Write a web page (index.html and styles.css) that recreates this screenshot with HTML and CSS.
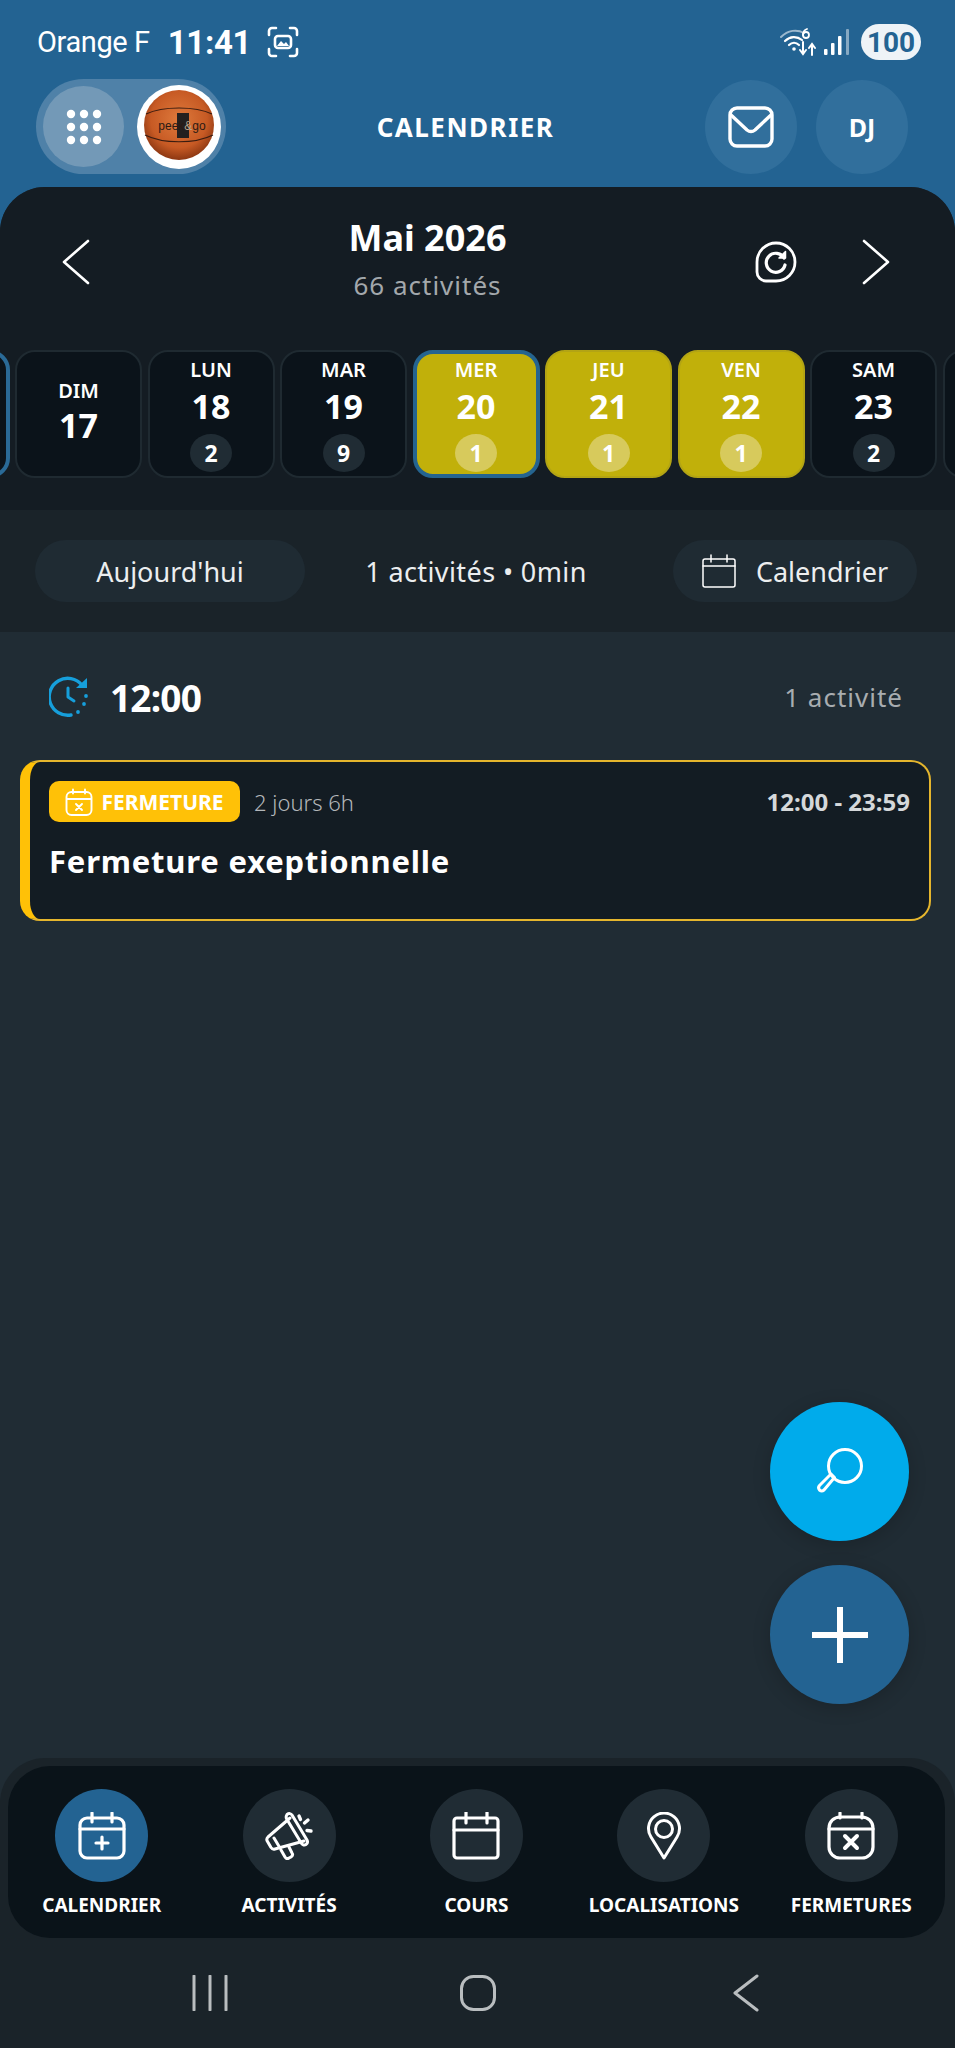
FILE: index.html
```html
<!DOCTYPE html>
<html lang="fr">
<head>
    <meta charset="UTF-8">
    <meta name="viewport" content="width=device-width, initial-scale=1.0">
    <title>Calendrier</title>
    <link rel="stylesheet" href="styles.css">
</head>
<body>
    <!-- Android status bar -->
    <div class="status">
        <div class="status-left">
            <span class="carrier">Orange F</span>
            <span class="clock">11:41</span>
            <svg class="shot-icon" viewBox="0 0 32 32" fill="none" stroke="#fff" stroke-width="2.6" stroke-linecap="round">
                <path d="M2 9V5a3 3 0 0 1 3-3h4M23 2h4a3 3 0 0 1 3 3v4M30 23v4a3 3 0 0 1-3 3h-4M9 30H5a3 3 0 0 1-3-3v-4"/>
                <rect x="8" y="10" width="16" height="12" rx="3"/>
                <path d="M10 20l4-5 3 3 2-2 3 4z" fill="#fff" stroke="none"/>
            </svg>
        </div>
        <div class="status-right">
            <svg class="wifi-icon" viewBox="0 0 36 28" fill="none" stroke="#fff" stroke-linecap="round">
                <path d="M1 9C8 2 17 1 24 5" stroke-width="2" opacity=".55"/>
                <path d="M5 13c5-5 12-5 17-1" stroke-width="2.2"/>
                <path d="M9 17c3-3 7-3 10 0" stroke-width="2.2"/>
                <circle cx="14" cy="21" r="1.8" fill="#fff" stroke="none"/>
                <path d="M23 14v11M20 22l3 4 3-4M32 27V17M29 20l3-4 3 4" stroke-width="2"/>
                <circle cx="26" cy="7" r="3" stroke-width="1.8"/>
                <path d="M23 7c0-3 1-5 4-6" stroke-width="1.8"/>
            </svg>
            <svg class="signal-icon" viewBox="0 0 26 26" fill="#fff">
                <rect x="0" y="20" width="3.5" height="6" rx="1"/>
                <rect x="7" y="14" width="3.5" height="12" rx="1"/>
                <rect x="14" y="7" width="3.5" height="19" rx="1"/>
                <rect x="22" y="0" width="3" height="26" rx="1" opacity=".45"/>
            </svg>
            <span class="battery">100</span>
        </div>
    </div>

    <!-- App header -->
    <header class="appbar">
        <div class="switcher">
            <div class="grid-btn">
                <svg viewBox="0 0 36 36" fill="#fff" class="dots-icon">
                    <circle cx="5" cy="5" r="4.2"/><circle cx="18" cy="5" r="4.2"/><circle cx="31" cy="5" r="4.2"/>
                    <circle cx="5" cy="18" r="4.2"/><circle cx="18" cy="18" r="4.2"/><circle cx="31" cy="18" r="4.2"/>
                    <circle cx="5" cy="31" r="4.2"/><circle cx="18" cy="31" r="4.2"/><circle cx="31" cy="31" r="4.2"/>
                </svg>
            </div>
            <div class="avatar">
                <svg viewBox="0 0 76 76" class="ball">
                    <defs>
                        <radialGradient id="ballFill" cx="50%" cy="42%" r="62%">
                            <stop offset="0" stop-color="#de7a3c"/>
                            <stop offset=".65" stop-color="#c75a24"/>
                            <stop offset="1" stop-color="#7f2f0e"/>
                        </radialGradient>
                    </defs>
                    <circle cx="38" cy="36" r="35" fill="url(#ballFill)"/>
                    <path d="M5 25C22 17 54 17 71 25M4 46C22 55 54 55 72 46" fill="none" stroke="#3a1c10" stroke-width="1.2"/>
                    <rect x="36" y="24" width="12" height="25" fill="#23201f"/>
                    <text x="41" y="41" class="ball-text" text-anchor="middle">peek<tspan class="ball-amp">&amp;</tspan>go</text>
                </svg>
            </div>
        </div>
        <div class="app-title">CALENDRIER</div>
        <div class="app-actions">
            <div class="round-btn">
                <svg viewBox="0 0 46 42" class="mail-icon" fill="none" stroke="#fff" stroke-width="3.4" stroke-linecap="round" stroke-linejoin="round">
                    <rect x="2" y="2" width="42" height="38" rx="7"/>
                    <path d="M3 9l16 15c2.500 2 5.500 2 8 0L43 9"/>
                </svg>
            </div>
            <div class="round-btn initials">DJ</div>
        </div>
    </header>

    <div class="sheet">
        <section class="cal-panel">
            <div class="month-row">
                <svg class="chevron" viewBox="0 0 28 46" fill="none" stroke="#fff" stroke-width="2.600" stroke-linecap="round" stroke-linejoin="round"><path d="M26 2L2 23l24 21"/></svg>
                <div class="month-title">
                    <div class="month-name">Mai 2026</div>
                    <div class="month-count">66 activités</div>
                </div>
                <svg class="refresh-icon" viewBox="0 0 42 42" fill="none" stroke="#fff" stroke-linecap="round" stroke-linejoin="round">
                    <path d="M21 2a19 19 0 0 1 0 38H11a9 9 0 0 1-9-9V21A19 19 0 0 1 21 2z" stroke-width="2.800"/>
                    <path d="M29 17a9.500 9.500 0 1 0 1 7" stroke-width="3.200"/>
                    <path d="M24 17h6.500v-6.500z" fill="#fff" stroke-width="1.500"/>
                </svg>
                <svg class="chevron" viewBox="0 0 28 46" fill="none" stroke="#fff" stroke-width="2.600" stroke-linecap="round" stroke-linejoin="round"><path d="M2 2l24 21L2 44"/></svg>
            </div>

            <div class="day-strip">
                <div class="day day-today"></div>
                <div class="day day-empty"><span class="day-name">DIM</span><span class="day-num">17</span></div>
                <div class="day"><span class="day-name">LUN</span><span class="day-num">18</span><span class="day-count">2</span></div>
                <div class="day"><span class="day-name">MAR</span><span class="day-num">19</span><span class="day-count">9</span></div>
                <div class="day day-closed day-selected"><span class="day-name">MER</span><span class="day-num">20</span><span class="day-count">1</span></div>
                <div class="day day-closed"><span class="day-name">JEU</span><span class="day-num">21</span><span class="day-count">1</span></div>
                <div class="day day-closed"><span class="day-name">VEN</span><span class="day-num">22</span><span class="day-count">1</span></div>
                <div class="day"><span class="day-name">SAM</span><span class="day-num">23</span><span class="day-count">2</span></div>
                <div class="day"></div>
            </div>
        </section>

        <section class="summary">
            <div class="pill pill-today">Aujourd'hui</div>
            <div class="summary-text">1 activités • 0min</div>
            <div class="pill pill-cal">
                <svg viewBox="0 0 34 34" class="pill-icon" fill="none" stroke="#fff" stroke-width="1.500" stroke-linecap="round" stroke-linejoin="round">
                    <rect x="1" y="5" width="32" height="28" rx="2"/>
                    <path d="M1 12h32M9 1v7M25 1v7"/>
                </svg>
                Calendrier
            </div>
        </section>

        <main class="content">
            <div class="hour-row">
                <div class="hour-left">
                    <svg viewBox="0 0 42 42" class="hour-icon" fill="none" stroke="#169fdb" stroke-width="3.400" stroke-linecap="round" stroke-linejoin="round">
                        <path d="M33 9A18.500 18.500 0 1 0 22 39"/>
                        <path d="M38 2v10H27z" fill="#169fdb" stroke="none"/>
                        <path d="M19 12v9l6 4" stroke-width="3"/>
                        <circle cx="37" cy="20" r="1.900" fill="#169fdb" stroke="none"/>
                        <circle cx="35" cy="28" r="1.900" fill="#169fdb" stroke="none"/>
                        <circle cx="29" cy="36" r="1.900" fill="#169fdb" stroke="none"/>
                    </svg>
                    <span class="hour">12:00</span>
                </div>
                <span class="hour-count">1 activité</span>
            </div>

            <article class="event">
                <div class="event-top">
                    <span class="tag">
                        <svg viewBox="0 0 28 28" class="tag-icon" fill="none" stroke="#fff" stroke-width="1.900" stroke-linecap="round" stroke-linejoin="round">
                            <rect x="1.500" y="4" width="25" height="23" rx="5"/>
                            <path d="M2 11h24M8 1.500v4M20 1.500v4M11 16l6 6M17 16l-6 6"/>
                        </svg>
                        FERMETURE
                    </span>
                    <span class="event-length">2 jours 6h</span>
                    <span class="event-time">12:00 - 23:59</span>
                </div>
                <h2 class="event-title">Fermeture exeptionnelle</h2>
            </article>

            <div class="fabs">
                <div class="fab fab-search">
                    <svg viewBox="0 0 50 50" class="fab-icon" fill="none" stroke="#fff" stroke-width="3" stroke-linecap="round" stroke-linejoin="round">
                        <circle cx="30" cy="19" r="16.500"/>
                        <path d="M18.500 30.500L15 27 3.500 38.500a3.500 3.500 0 0 0 0 4.500 3.500 3.500 0 0 0 4.500 0z" transform="translate(1 0)"/>
                    </svg>
                </div>
                <div class="fab fab-add">
                    <svg viewBox="0 0 56 56" class="fab-icon-add" fill="#fff">
                        <rect x="25" y="0" width="6" height="56"/>
                        <rect x="0" y="25" width="56" height="6"/>
                    </svg>
                </div>
            </div>
        </main>

        <footer class="footer">
            <nav class="tabs">
                <div class="tab">
                    <div class="tab-icon tab-active">
                        <svg viewBox="0 0 48 48" fill="none" stroke="#fff" stroke-width="3.200" stroke-linecap="round" stroke-linejoin="round">
                            <rect x="2" y="6" width="44" height="40" rx="7"/>
                            <path d="M2 17h44M14 1v9M34 1v9M24 25v12M18 31h12"/>
                        </svg>
                    </div>
                    <span class="tab-label">CALENDRIER</span>
                </div>
                <div class="tab">
                    <div class="tab-icon">
                        <svg viewBox="0 0 48 48" fill="none" stroke="#fff" stroke-width="3" stroke-linecap="round" stroke-linejoin="round">
                            <path d="M25 6L3 25c-1.500 1.500-1.500 3-.5 4.500l3.500 6c1 1.500 2.500 2 4 1.500L39 29"/>
                            <path d="M22 2.500c2-1.500 4-1 5 .5l15 25c1 2 .5 3.500-1 4.500s-3.500.5-4.500-1L22 7.500c-1-1.500-1-3.500 0-5z"/>
                            <path d="M9 26l6 10M16 38l4 7c1 1.500 2.500 2 4 1l2-1c1.500-1 2-2.500 1-4l-3-6"/>
                            <path d="M34 4l1.500 3.500M43 8l-3.500 3M46 19l-4-.5" stroke-width="3.400"/>
                        </svg>
                    </div>
                    <span class="tab-label">ACTIVITÉS</span>
                </div>
                <div class="tab">
                    <div class="tab-icon">
                        <svg viewBox="0 0 48 48" fill="none" stroke="#fff" stroke-width="3.200" stroke-linecap="round" stroke-linejoin="round">
                            <rect x="2" y="6" width="44" height="40" rx="3"/>
                            <path d="M2 18h44M14 0v11M35 0v11"/>
                        </svg>
                    </div>
                    <span class="tab-label">COURS</span>
                </div>
                <div class="tab">
                    <div class="tab-icon">
                        <svg viewBox="0 0 48 48" fill="none" stroke="#fff" stroke-width="3" stroke-linecap="round" stroke-linejoin="round">
                            <path d="M24 46L11 25a15.500 15.500 0 1 1 26 0z"/>
                            <circle cx="24" cy="17" r="8.500"/>
                        </svg>
                    </div>
                    <span class="tab-label">LOCALISATIONS</span>
                </div>
                <div class="tab">
                    <div class="tab-icon">
                        <svg viewBox="0 0 48 48" fill="none" stroke="#fff" stroke-width="3.200" stroke-linecap="round" stroke-linejoin="round">
                            <rect x="2" y="5" width="44" height="41" rx="11"/>
                            <path d="M2 17h44M13 1v5M35 1v5"/>
                            <path d="M18 24l12 12M30 24L18 36" stroke-width="4"/>
                        </svg>
                    </div>
                    <span class="tab-label">FERMETURES</span>
                </div>
            </nav>
            <!-- Android navigation buttons -->
            <div class="sysnav">
                <svg viewBox="0 0 36 36" class="sys-icon" fill="none" stroke="#b9bdbf" stroke-width="3" stroke-linecap="round"><path d="M2 1v34M18 1v34M34 1v34"/></svg>
                <svg viewBox="0 0 36 36" class="sys-icon" fill="none" stroke="#b9bdbf" stroke-width="3"><rect x="1.500" y="1.500" width="33" height="33" rx="12"/></svg>
                <svg viewBox="0 0 26 38" class="sys-back" fill="none" stroke="#b9bdbf" stroke-width="3" stroke-linecap="round" stroke-linejoin="round"><path d="M24 2L2 19l22 17"/></svg>
            </div>
        </footer>
    </div>
</body>
</html>
```

FILE: styles.css
```css
* {
    box-sizing: border-box;
}
html, body {
    margin: 0;
    padding: 0;
}
body {
    width: 955px;
    height: 2048px;
    display: flex;
    flex-direction: column;
    overflow: hidden;
    background-color: #236392;
    color: #fff;
    font-family: "Noto Sans", "Open Sans", sans-serif;
}

/* status bar */
.status {
    height: 79px;
    padding: 5px 34px 0 37px;
    display: flex;
    align-items: center;
    justify-content: space-between;
    flex: none;
}
.status-left, .status-right {
    display: flex;
    align-items: center;
}
.carrier {
    font-family: "Roboto", sans-serif;
    font-size: 29px;
    letter-spacing: -0.4px;
    margin-right: 18px;
}
.clock {
    font-family: "Roboto", sans-serif;
    font-size: 33px;
    font-weight: 700;
    letter-spacing: -0.3px;
    margin-right: 16px;
}
.shot-icon {
    width: 32px;
    height: 32px;
}
.wifi-icon {
    width: 36px;
    height: 28px;
    margin-right: 8px;
}
.signal-icon {
    width: 26px;
    height: 26px;
    margin-right: 11px;
}
.battery {
    width: 60px;
    height: 36px;
    border-radius: 18px;
    background-color: #eef3f7;
    color: #236392;
    font-family: "Roboto", sans-serif;
    font-size: 28px;
    font-weight: 700;
    display: flex;
    align-items: center;
    justify-content: center;
}

/* app header */
.appbar {
    height: 108px;
    padding: 0 47px 13px 36px;
    display: flex;
    align-items: center;
    justify-content: space-between;
    flex: none;
}
.switcher {
    width: 190px;
    height: 95px;
    border-radius: 48px;
    background-color: #4f81a8;
    padding-left: 7px;
    display: flex;
    align-items: center;
    gap: 13px;
}
.grid-btn {
    width: 81px;
    height: 81px;
    border-radius: 50%;
    background-color: #7399b7;
    display: flex;
    align-items: center;
    justify-content: center;
}
.dots-icon {
    width: 36px;
    height: 36px;
}
.avatar {
    width: 84px;
    height: 84px;
    border-radius: 50%;
    background-color: #fff;
    display: flex;
    align-items: center;
    justify-content: center;
}
.ball {
    width: 76px;
    height: 76px;
}
.ball-text {
    font-family: "Liberation Sans", sans-serif;
    font-size: 12px;
    fill: #2b1a14;
}
.ball-amp {
    fill: #b9a58e;
}
.app-title {
    font-size: 26px;
    font-weight: 700;
    letter-spacing: 1.5px;
}
.app-actions {
    display: flex;
    gap: 19px;
}
.round-btn {
    width: 92px;
    height: 94px;
    border-radius: 50%;
    background-color: #316f9c;
    display: flex;
    align-items: center;
    justify-content: center;
}
.mail-icon {
    width: 46px;
    height: 42px;
}
.initials {
    font-size: 25px;
    font-weight: 700;
}

/* sheet under the header */
.sheet {
    flex: 1;
    min-height: 0;
    border-radius: 45px 45px 0 0;
    overflow: hidden;
    display: flex;
    flex-direction: column;
    background-color: #202c34;
}
.cal-panel {
    height: 323px;
    background-color: #141c23;
    flex: none;
}
.month-row {
    height: 163px;
    padding: 0 65px 14px 62px;
    display: flex;
    align-items: center;
}
.chevron {
    width: 28px;
    height: 46px;
}
.month-title {
    flex: 1;
    text-align: center;
    padding-bottom: 4px;
    padding-left: 10px;
}
.month-name {
    font-size: 36px;
    font-weight: 700;
    line-height: 46px;
}
.month-count {
    font-size: 26px;
    letter-spacing: 1px;
    line-height: 38px;
    margin-top: 5px;
    color: #a3a8ac;
}
.refresh-icon {
    width: 42px;
    height: 42px;
    margin: 0 65px 0 0;
}

/* day strip */
.day-strip {
    display: flex;
    justify-content: center;
    gap: 5.5px;
    padding-right: 3px;
    overflow: hidden;
}
.day {
    width: 127px;
    height: 128px;
    flex: none;
    border: 2px solid #1f2a31;
    border-radius: 20px;
    background-color: #0b131a;
    display: flex;
    flex-direction: column;
    align-items: center;
    padding-top: 6px;
}
.day-name {
    font-size: 20px;
    font-weight: 600;
    line-height: 24px;
}
.day-num {
    font-size: 34px;
    font-weight: 700;
    line-height: 44px;
    margin-top: 2px;
}
.day-count {
    width: 42px;
    height: 38px;
    border-radius: 50%;
    background-color: #202c34;
    font-size: 23px;
    font-weight: 700;
    display: flex;
    align-items: center;
    justify-content: center;
    margin-top: 6px;
}
.day-empty {
    padding-top: 27px;
}
.day-empty .day-num {
    margin-top: 0;
}
.day-today {
    border: 4px solid #2a6a97;
}
.day-closed {
    background-color: #c1b00a;
    border-color: #b3a414;
}
.day-closed .day-count {
    background-color: #d7ca5c;
}
.day-selected {
    border: 4px solid #25648f;
    padding-top: 4px;
}

/* summary bar */
.summary {
    height: 122px;
    background-color: #1a2329;
    padding: 0 38px 0 35px;
    display: flex;
    align-items: center;
    justify-content: space-between;
    flex: none;
}
.pill {
    height: 62px;
    border-radius: 31px;
    background-color: #1f2b33;
    color: #eceeef;
    font-size: 27px;
    display: flex;
    align-items: center;
    justify-content: center;
}
.pill-today {
    width: 270px;
}
.pill-cal {
    width: 244px;
    gap: 20px;
}
.pill-icon {
    width: 34px;
    height: 34px;
}
.summary-text {
    font-size: 27px;
    letter-spacing: 0.4px;
    color: #eceeef;
    margin-right: 26px;
}

/* hour section and event */
.content {
    flex: 1;
    min-height: 0;
    position: relative;
    background-color: #202c34;
    padding: 0 24px 0 20px;
}
.hour-row {
    height: 128px;
    padding: 2px 28px 0 29px;
    display: flex;
    align-items: center;
    justify-content: space-between;
}
.hour-left {
    display: flex;
    align-items: center;
    gap: 19px;
}
.hour-icon {
    width: 42px;
    height: 42px;
}
.hour {
    font-size: 37px;
    font-weight: 700;
    letter-spacing: -0.8px;
}
.hour-count {
    font-size: 26px;
    letter-spacing: 1px;
    color: #a8adb0;
}
.event {
    height: 161px;
    border: 2px solid #e5b62d;
    border-left: 10px solid #ffc107;
    border-radius: 20px;
    background-color: #131c23;
    padding: 19px 19px 0 19px;
}
.event-top {
    display: flex;
    align-items: center;
}
.tag {
    width: 191px;
    height: 41px;
    border-radius: 10px;
    background-color: #ffc107;
    font-size: 21px;
    font-weight: 700;
    display: flex;
    align-items: center;
    justify-content: center;
    gap: 8px;
}
.tag-icon {
    width: 28px;
    height: 28px;
}
.event-length {
    font-size: 22px;
    font-weight: 300;
    color: #b3b7ba;
    margin-left: 14px;
}
.event-time {
    margin-left: auto;
    font-size: 24px;
    font-weight: 700;
    color: #d5d8da;
}
.event-title {
    margin: 18px 0 0 0;
    font-size: 31px;
    font-weight: 700;
    letter-spacing: 0.8px;
}

/* floating buttons */
.fabs {
    position: absolute;
    right: 46px;
    bottom: 54px;
    display: flex;
    flex-direction: column;
    gap: 24px;
}
.fab {
    width: 139px;
    height: 139px;
    border-radius: 50%;
    display: flex;
    align-items: center;
    justify-content: center;
    box-shadow: 0 4px 18px rgba(0, 0, 0, 0.18);
}
.fab-search {
    background-color: #00abeb;
}
.fab-add {
    background-color: #236392;
}
.fab-icon {
    width: 50px;
    height: 50px;
}
.fab-icon-add {
    width: 56px;
    height: 56px;
}

/* bottom tabs */
.footer {
    height: 290px;
    flex: none;
    background-color: #1a2329;
    border-radius: 45px 45px 0 0;
    padding-top: 8px;
}
.tabs {
    height: 172px;
    margin: 0 10px 0 8px;
    border-radius: 42px;
    background-color: #0a1319;
    display: grid;
    grid-template-columns: repeat(5, 1fr);
    padding-top: 23px;
}
.tab {
    display: flex;
    flex-direction: column;
    align-items: center;
}
.tab-icon {
    width: 93px;
    height: 93px;
    border-radius: 50%;
    background-color: #202c34;
    display: flex;
    align-items: center;
    justify-content: center;
}
.tab-icon svg {
    width: 48px;
    height: 48px;
}
.tab-active {
    background-color: #236392;
}
.tab-label {
    margin-top: 10px;
    font-size: 19px;
    font-weight: 700;
    line-height: 26px;
    white-space: nowrap;
}
.sysnav {
    height: 110px;
    display: grid;
    grid-template-columns: repeat(3, 268px);
    justify-content: center;
    justify-items: center;
    align-items: center;
}
.sys-icon {
    width: 36px;
    height: 36px;
}
.sys-back {
    width: 26px;
    height: 38px;
}
```
